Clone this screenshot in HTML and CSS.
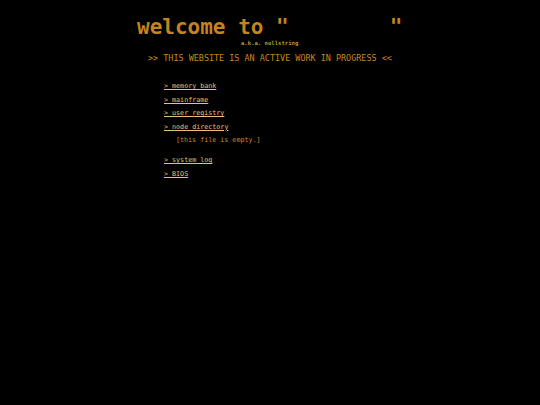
FILE: index.html
```html
<!DOCTYPE html>
<html>
<head>
<meta charset="utf-8">
<link rel="stylesheet" href="styles.css">
</head>
<body>
<div class="page">
  <header class="head">
    <h1 class="title">welcome to "        "</h1>
    <div class="aka">a.k.a. nullstring</div>
  </header>
  <p class="wip">&gt;&gt; THIS WEBSITE IS AN ACTIVE WORK IN PROGRESS &lt;&lt;</p>
  <ul class="menu">
    <li><a href="#">&gt; memory bank</a></li>
    <li><a href="#">&gt; mainframe</a></li>
    <li><a href="#">&gt; user registry</a></li>
    <li><a href="#">&gt; node directory</a></li>
    <li class="note">[this file is empty.]</li>
    <li class="gap"><a href="#">&gt; system log</a></li>
    <li><a href="#">&gt; BIOS</a></li>
  </ul>
</div>
</body>
</html>
```
FILE: styles.css
```css
html, body {
  margin: 0;
  padding: 0;
  background: #000;
  height: 100%;
}
body {
  font-family: "DejaVu Sans Mono", monospace;
  color: #c8861e;
}
.page {
  width: 270px;
  margin: 0 auto;
  padding-top: 14px;
  padding-left: 4px;
}
.head {
  display: flex;
  flex-direction: column;
}
.title {
  margin: 0;
  font-size: 21px;
  line-height: 26px;
  font-weight: bold;
  white-space: pre;
  color: #c4841e;
}
.aka {
  margin-left: 104px;
  font-size: 5.6px;
  line-height: 7px;
  font-weight: bold;
  color: #b89a3a;
}
.wip {
  margin: 5px 0 0 11px;
  font-size: 8.45px;
  line-height: 12px;
  color: #c8861e;
}
.menu {
  list-style: none;
  margin: 16px 0 0 27px;
  padding: 0;
  font-size: 6.7px;
  line-height: 13.6px;
}
.menu a {
  color: #e6c27a;
  text-decoration: underline;
}
.note {
  padding-left: 12px;
  color: #c8862e;
}
.gap {
  margin-top: 6px;
}
```
